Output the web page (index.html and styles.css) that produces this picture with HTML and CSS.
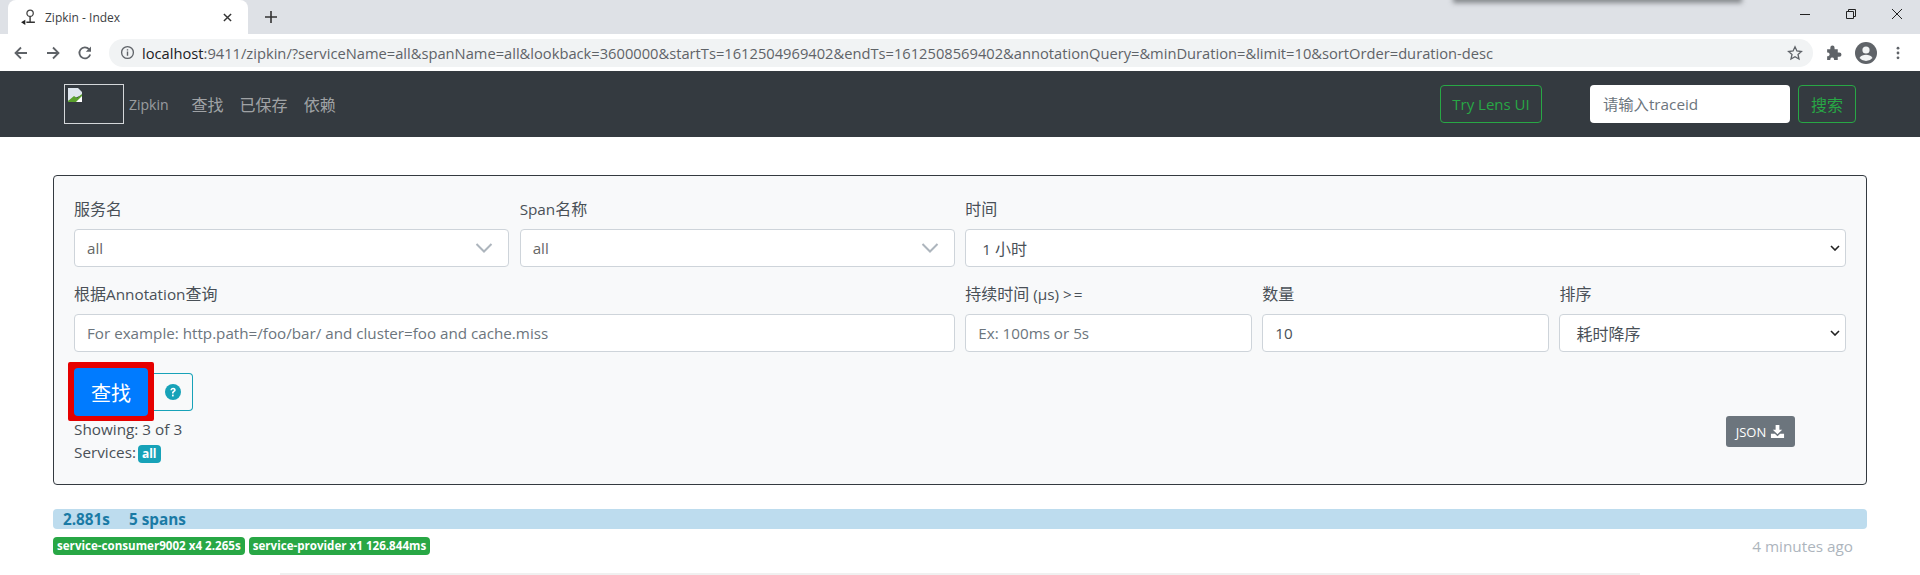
FILE: index.html
```html
<!DOCTYPE html>
<html lang="zh">
<head>
<meta charset="utf-8">
<title>Zipkin - Index</title>
<link rel="stylesheet" href="styles.css">
</head>
<body>
<div class="tabstrip">
  <div class="tab">
    <svg class="tab-icon" viewBox="0 0 16 16"><circle cx="9.5" cy="4" r="3" fill="#fff" stroke="#444" stroke-width="1.2"/><path d="M9.5 7v6M6 12.5h8" stroke="#333" stroke-width="1.3" fill="none"/><path d="M1 12.5l4-2.5v5z" fill="#222"/></svg>
    <span class="tab-title">Zipkin - Index</span>
    <svg class="tab-close" viewBox="0 0 10 10"><path d="M1 1l8 8M9 1l-8 8" stroke="#333" stroke-width="1.6"/></svg>
  </div>
  <svg class="new-tab" viewBox="0 0 12 12"><path d="M6 0v12M0 6h12" stroke="#333" stroke-width="1.6"/></svg>
  <div class="winctl">
    <svg viewBox="0 0 12 12"><path d="M1 6.5h10" stroke="#222" stroke-width="1"/></svg>
    <svg viewBox="0 0 12 12"><path d="M1.5 3.5h7v7h-7zM3.5 3.5v-2h7v7h-2" stroke="#222" stroke-width="1" fill="none"/></svg>
    <svg viewBox="0 0 12 12"><path d="M1 1l10 10M11 1l-10 10" stroke="#222" stroke-width="1"/></svg>
  </div>
  <div class="popup-edge"></div>
</div>
<div class="toolbar">
  <svg class="nav-ic" viewBox="0 0 16 16"><path d="M14 8H2.5M8 2.5L2.5 8 8 13.5" stroke="#5f6368" stroke-width="1.8" fill="none"/></svg>
  <svg class="nav-ic" viewBox="0 0 16 16"><path d="M2 8h11.5M8 2.5L13.5 8 8 13.5" stroke="#5f6368" stroke-width="1.8" fill="none"/></svg>
  <svg class="nav-ic" viewBox="0 0 16 16"><path d="M13.2 9.5A5.5 5.5 0 1 1 12 4.2" stroke="#5f6368" stroke-width="1.8" fill="none"/><path d="M14 1.5v5.2H8.8z" fill="#5f6368"/></svg>
  <div class="omnibox">
    <svg class="info" viewBox="0 0 16 16"><circle cx="8" cy="8" r="6.3" fill="none" stroke="#5f6368" stroke-width="1.4"/><path d="M8 7v4.5M8 4.4v1.5" stroke="#5f6368" stroke-width="1.5"/></svg>
    <span class="url"><span class="host">localhost</span>:9411/zipkin/?serviceName=all&amp;spanName=all&amp;lookback=3600000&amp;startTs=1612504969402&amp;endTs=1612508569402&amp;annotationQuery=&amp;minDuration=&amp;limit=10&amp;sortOrder=duration-desc</span>
    <svg class="star" viewBox="0 0 16 16"><path d="M8 1.8l1.9 4.2 4.5.5-3.4 3 1 4.5L8 11.7 4 14l1-4.5-3.4-3 4.5-.5z" fill="none" stroke="#5f6368" stroke-width="1.3"/></svg>
  </div>
  <svg class="ext" viewBox="0 0 16 16"><path d="M2 5h3V3.5a2 2 0 0 1 4 0V5h3v3h1.5a2 2 0 0 1 0 4H12v3H8.5v-1a1.8 1.8 0 0 0-3.5 0v1H2v-3.5h1a1.8 1.8 0 0 0 0-3.5H2z" fill="#5f6368"/></svg>
  <svg class="avatar" viewBox="0 0 22 22"><circle cx="11" cy="11" r="11" fill="#5f6368"/><circle cx="11" cy="8" r="3.6" fill="#f1f3f4"/><path d="M4.5 16c1.5-2.6 4-3.2 6.5-3.2s5 .6 6.5 3.2a8.5 8.5 0 0 1-13 0z" fill="#f1f3f4"/></svg>
  <svg class="menu" viewBox="0 0 4 16"><circle cx="2" cy="2.5" r="1.6" fill="#5f6368"/><circle cx="2" cy="8" r="1.6" fill="#5f6368"/><circle cx="2" cy="13.5" r="1.6" fill="#5f6368"/></svg>
</div>
<nav class="navbar">
  <div class="brand">
    <div class="logo-broken">
      <svg class="broken-ic" viewBox="0 0 16 16"><path d="M1 1h10l4 4v3L1 14z" fill="#dfe6ee"/><path d="M1 14l6-5 3 2 5-4v8H1z" fill="#5aa02c"/><path d="M9 15l6-6v6z" fill="#fff"/></svg>
    </div>
    <span class="brand-name">Zipkin</span>
  </div>
  <a class="nav-link">查找</a>
  <a class="nav-link">已保存</a>
  <a class="nav-link">依赖</a>
  <span class="nav-spacer"></span>
  <a class="btn-green lens">Try Lens UI</a>
  <input class="trace-input" placeholder="请输入traceid">
  <a class="btn-green search">搜索</a>
</nav>
<main class="content">
  <section class="card">
    <div class="grid">
      <div class="c3 field">
        <label><span class="zh">服务名</span></label>
        <div class="combo"><span>all</span><svg viewBox="0 0 20 12"><path d="M2.5 2l7.5 7.5L17.5 2" fill="none" stroke="#adb5bd" stroke-width="2"/></svg></div>
      </div>
      <div class="c3 field">
        <label>Span<span class="zh">名称</span></label>
        <div class="combo"><span>all</span><svg viewBox="0 0 20 12"><path d="M2.5 2l7.5 7.5L17.5 2" fill="none" stroke="#adb5bd" stroke-width="2"/></svg></div>
      </div>
      <div class="c6 field">
        <label><span class="zh">时间</span></label>
        <div class="native"><span>1 <span class="zh">小时</span></span><svg viewBox="0 0 10 6"><path d="M1 1l4 4 4-4" fill="none" stroke="#222" stroke-width="1.6"/></svg></div>
      </div>
      <div class="c6 field">
        <label><span class="zh">根据</span>Annotation<span class="zh">查询</span></label>
        <input class="ctl" placeholder="For example: http.path=/foo/bar/ and cluster=foo and cache.miss">
      </div>
      <div class="c2 field">
        <label><span class="zh">持续时间</span> (μs) <span class="cmp">&gt;=</span></label>
        <input class="ctl" placeholder="Ex: 100ms or 5s">
      </div>
      <div class="c2 field">
        <label><span class="zh">数量</span></label>
        <input class="ctl" value="10">
      </div>
      <div class="c2 field">
        <label><span class="zh">排序</span></label>
        <div class="native"><span class="zh">耗时降序</span><svg viewBox="0 0 10 6"><path d="M1 1l4 4 4-4" fill="none" stroke="#222" stroke-width="1.6"/></svg></div>
      </div>
    </div>
    <div class="actions">
      <div class="actions-left">
        <div class="find-wrap">
          <div class="find-mark"><button class="btn-find">查找</button></div>
          <button class="btn-help"><svg viewBox="0 0 16 16"><circle cx="8" cy="8" r="8" fill="#17a2b8"/><path d="M5.4 6.2C5.5 4.7 6.6 3.8 8.1 3.8c1.5 0 2.6.9 2.6 2.2 0 1-.6 1.5-1.3 2-.6.4-.8.7-.8 1.3v.3H7v-.5c0-1 .4-1.5 1.1-2 .6-.4.9-.7.9-1.1 0-.5-.4-.8-.9-.8-.6 0-1 .4-1 1z" fill="#fff"/><rect x="7" y="10.6" width="1.7" height="1.8" fill="#fff"/></svg></button>
        </div>
        <div class="stat">Showing: 3 of 3</div>
        <div class="stat">Services: <span class="badge-all">all</span></div>
      </div>
      <a class="btn-json">JSON <svg viewBox="0 0 16 16"><path d="M6 1h4v5h3L8 11 3 6h3z" fill="#fff"/><path d="M1 10.5h4.2L8 13l2.8-2.5H15V15H1z" fill="#fff"/></svg></a>
    </div>
  </section>
  <div class="trace-bar"><span>2.881s</span><span>5 spans</span></div>
  <div class="trace-meta">
    <span class="badge-svc">service-consumer9002 x4 2.265s</span>
    <span class="badge-svc">service-provider x1 126.844ms</span>
    <span class="ago">4 minutes ago</span>
  </div>
  <div class="next-row"></div>
</main>
</body>
</html>
```

FILE: styles.css
```css
* { box-sizing: border-box; }
html, body { margin: 0; height: 575px; overflow: hidden; background: #fff; }
body { font-family: "Open Sans", "Noto Sans CJK SC", sans-serif; color: #495057; font-size: 15.3px; }
.zh { font-size: 16px; }

.tabstrip { position: relative; height: 34px; background: #dee1e6; display: flex; align-items: flex-end; padding-left: 8px; }
.tab { width: 240px; height: 34px; background: #fff; border-radius: 8px 8px 0 0; display: flex; align-items: center; padding: 0 12px; }
.tab-icon { width: 17px; height: 17px; margin-right: 8px; flex: none; }
.tab-title { font-size: 12px; color: #3c4043; flex: 1; }
.tab-close { width: 9px; height: 9px; margin-right: 4px; }
.new-tab { width: 12px; height: 12px; margin: 0 0 11px 17px; }
.winctl { margin-left: auto; height: 34px; display: flex; align-items: flex-start; padding-top: 8px; }
.winctl svg { width: 12px; height: 12px; margin-right: 34px; }
.winctl svg:last-child { margin-right: 17px; }
.popup-edge { position: absolute; left: 1455px; top: -4px; width: 285px; height: 4px; box-shadow: 0 1px 5px 2px rgba(60, 64, 67, .55); }

.toolbar { height: 37px; background: #fff; display: flex; align-items: center; padding-left: 13px; }
.nav-ic { width: 16px; height: 16px; margin-right: 16px; flex: none; }
.omnibox { width: 1704px; height: 28px; background: #f1f3f4; border-radius: 14px; display: flex; align-items: center; padding: 0 10px 0 11px; flex: none; }
.info { width: 15px; height: 15px; margin-right: 7px; flex: none; }
.url { font-size: 14.7px; color: #5f6368; flex: 1; white-space: nowrap; }
.host { color: #202124; }
.star { width: 16px; height: 16px; flex: none; }
.ext { width: 17px; height: 17px; margin-left: 12px; flex: none; }
.avatar { width: 22px; height: 22px; margin-left: 13px; flex: none; }
.menu { width: 4px; height: 14px; margin-left: 19px; flex: none; }

.navbar { height: 66px; background: #343a40; display: flex; align-items: center; padding: 0 64px 0 64px; }
.brand { display: flex; align-items: center; margin-right: 23px; }
.logo-broken { width: 60px; height: 40px; border: 1px solid #d4d7da; padding: 2px 0 0 2px; margin-right: 5px; }
.broken-ic { display: block; width: 16px; height: 16px; }
.brand-name { color: rgba(255, 255, 255, .5); font-size: 14px; }
.nav-link { color: rgba(255, 255, 255, .55); font-size: 16px; margin-right: 16px; }
.nav-spacer { flex: 1; }
.btn-green { border: 1px solid #28a745; color: #28a745; border-radius: 4px; height: 38px; display: flex; align-items: center; justify-content: center; font-size: 15px; }
.lens { width: 102px; margin-right: 48px; }
.trace-input { width: 200px; height: 38px; border: 0; border-radius: 4px; padding: 0 13px; font: 15.3px "Open Sans", "Noto Sans CJK SC", sans-serif; margin-right: 8px; }
.trace-input::placeholder, .ctl::placeholder { color: #6c757d; opacity: 1; }
.search { width: 58px; font-size: 16px; }

.content { padding: 38px 53px 0; }
.card { height: 310px; border: 1px solid #343a40; border-radius: 4px; background: #f8f9fa; padding: 20px 20px 0; }
.grid { display: grid; grid-template-columns: repeat(12, 1fr); column-gap: 10.5px; row-gap: 14px; }
.c2 { grid-column: span 2; }
.c3 { grid-column: span 3; }
.c6 { grid-column: span 6; }
.field label { display: block; height: 33px; line-height: 27px; color: #495057; }
.cmp { letter-spacing: 2px; }
.ctl, .combo, .native { display: flex; align-items: center; width: 100%; height: 38px; background: #fff; border: 1px solid #ced4da; border-radius: 4px; padding: 0 12px; font: 15.2px "Open Sans", "Noto Sans CJK SC", sans-serif; color: #495057; }
.combo { justify-content: space-between; color: #666; padding-right: 14px; }
.combo svg { width: 20px; height: 12px; }
.native { justify-content: space-between; padding: 0 5px 0 16px; }
.native svg { width: 10px; height: 6px; }

.actions { display: flex; justify-content: space-between; align-items: flex-start; margin-top: 10px; margin-left: -6px; padding-right: 51px; }
.actions-left { display: flex; flex-direction: column; }
.find-wrap { display: flex; align-items: center; margin-bottom: -3px; }
.find-mark { border: solid #e60000; border-width: 6px 6px 5px; border-radius: 2px; background: #e60000; }
.btn-find { display: block; width: 74px; height: 48px; background: #007bff; color: #fff; border: 0; border-radius: 4px; font: 20px "Open Sans", "Noto Sans CJK SC", sans-serif; padding: 0; }
.btn-help { width: 39px; height: 38px; background: transparent; border: 1px solid #17a2b8; border-left: 0; border-radius: 0 4px 4px 0; padding: 0; display: flex; align-items: center; justify-content: center; }
.btn-help svg { width: 16px; height: 16px; }
.stat { height: 23px; line-height: 23px; margin-left: 6px; color: #495057; }
.badge-all { display: inline-block; background: #17a2b8; color: #fff; font-size: 12px; font-weight: 700; line-height: 18px; height: 18px; padding: 0 4px; border-radius: 4px; margin-left: -2px; }
.btn-json { margin-top: 54px; width: 69px; height: 31px; background: #6c757d; color: #fff; border-radius: 3px; display: flex; align-items: center; justify-content: center; font-size: 13px; gap: 4px; }
.btn-json svg { width: 15px; height: 15px; }

.trace-bar { margin-top: 24px; height: 20px; background: #bddcee; border-radius: 4px; padding-left: 10px; display: flex; gap: 19px; align-items: center; color: #1a7aa5; font-weight: 700; }
.trace-meta { margin-top: 8px; height: 18px; display: flex; align-items: center; gap: 4px; }
.badge-svc { background: #28a745; color: #fff; font-size: 11.6px; font-weight: 700; height: 18px; line-height: 18px; padding: 0 4px; border-radius: 4px; }
.ago { margin-left: auto; margin-right: 14px; color: #adb5bd; }
.next-row { height: 3px; margin: 18px 227px 0; background: #f0f0f0; }
```
